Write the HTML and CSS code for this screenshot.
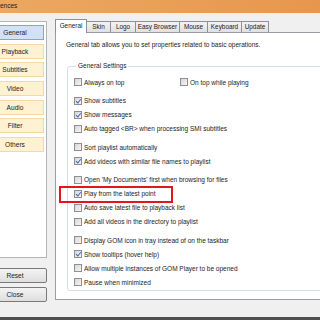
FILE: index.html
```html
<!DOCTYPE html>
<html lang="en">
<head>
    <meta charset="UTF-8">
    <meta name="viewport" content="width=device-width, initial-scale=1.0">
    <title>Preferences</title>
    <link rel="stylesheet" href="styles.css">
</head>
<body>
    <div class="window">
        <!-- 標題列 -->
        <div class="titlebar">ences</div>

        <div class="main">
            <!-- 左側分類 -->
            <div class="side">
                <div class="cats">
                    <div class="cat active">General</div>
                    <div class="cat">Playback</div>
                    <div class="cat">Subtitles</div>
                    <div class="cat">Video</div>
                    <div class="cat">Audio</div>
                    <div class="cat">Filter</div>
                    <div class="cat">Others</div>
                </div>
                <div class="side-buttons">
                    <button class="btn">Reset</button>
                    <button class="btn">Close</button>
                </div>
            </div>

            <!-- 分頁 -->
            <div class="tabbox">
                <div class="tabs">
                    <div class="tab selected" style="width: 32px">General</div>
                    <div class="tab" style="width: 25px">Skin</div>
                    <div class="tab" style="width: 26px">Logo</div>
                    <div class="tab" style="width: 45px">Easy Browser</div>
                    <div class="tab" style="width: 29px">Mouse</div>
                    <div class="tab" style="width: 35px">Keyboard</div>
                    <div class="tab" style="width: 28px">Update</div>
                </div>
                <div class="page">
                    <p class="desc">General tab allows you to set properties related to basic operations.</p>
                    <fieldset class="group">
                        <legend>General Settings</legend>

                        <div class="row">
                            <span class="opt first"><span class="cb"></span>Always on top</span>
                            <span class="opt"><span class="cb"></span>On top while playing</span>
                        </div>

                        <div class="row spaced"><span class="cb checked"></span>Show subtitles</div>
                        <div class="row"><span class="cb checked"></span>Show messages</div>
                        <div class="row"><span class="cb"></span>Auto tagged &lt;BR&gt; when processing SMI subtitles</div>

                        <div class="row spaced"><span class="cb"></span>Sort playlist automatically</div>
                        <div class="row"><span class="cb checked"></span>Add videos with similar file names to playlist</div>

                        <div class="row spaced"><span class="cb"></span>Open 'My Documents' first when browsing for files</div>
                        <div class="row marked"><span class="cb checked"></span>Play from the latest point<span class="highlight"></span></div>
                        <div class="row"><span class="cb"></span>Auto save latest file to playback list</div>
                        <div class="row"><span class="cb"></span>Add all videos in the directory to playlist</div>

                        <div class="row spaced"><span class="cb"></span>Display GOM icon in tray instead of on the taskbar</div>
                        <div class="row"><span class="cb checked"></span>Show tooltips (hover help)</div>
                        <div class="row"><span class="cb"></span>Allow multiple instances of GOM Player to be opened</div>
                        <div class="row"><span class="cb"></span>Pause when minimized</div>
                    </fieldset>
                </div>
            </div>
        </div>

        <div class="taskbar"></div>
    </div>
</body>
</html>
```

FILE: styles.css
```css
body {
    margin: 0;
    width: 320px;
    height: 320px;
    overflow: hidden;
    font-family: "Liberation Sans", Arial, sans-serif;
    color: #1b1b1b;
    background-color: #f0f0f0;
}

.window {
    width: 320px;
    height: 320px;
    display: flex;
    flex-direction: column;
    overflow: hidden;
}

.titlebar {
    height: 13px;
    flex: none;
    background: linear-gradient(to right, #eba861, #e7974d);
    font-size: 6.5px;
    line-height: 12px;
    color: #222;
}

.main {
    height: 304px;
    flex: none;
    display: flex;
}

/* 左側 */
.side {
    width: 47px;
    flex: none;
    display: flex;
    flex-direction: column;
    align-items: flex-end;
}

.cats {
    margin-top: 8px;
    width: 67px;
    height: 237px;
    box-sizing: border-box;
    background: #fff;
    border: 1px solid #b5b5b5;
    padding: 3px 2px 0 5px;
    display: flex;
    flex-direction: column;
    gap: 3.7px;
}

.cat {
    height: 15px;
    box-sizing: border-box;
    background: #fff2d2;
    border: 1px solid #f4d9a2;
    font-size: 6.6px;
    line-height: 13px;
    text-align: center;
}

.cat.active {
    background: #d3e1f5;
    border-color: #88a5cd;
}

.side-buttons {
    margin-top: 10px;
    display: flex;
    flex-direction: column;
    gap: 4px;
}

.btn {
    width: 64px;
    height: 15px;
    padding: 0;
    box-sizing: border-box;
    border: 1px solid #7a7a7a;
    border-radius: 2px;
    background: linear-gradient(#f4f4f4, #dedede);
    font-family: inherit;
    font-size: 6.6px;
    color: #1b1b1b;
}

/* 分頁 */
.tabbox {
    margin-left: 8px;
    margin-top: 6px;
    width: 300px;
    flex: none;
}

.tabs {
    height: 13px;
    display: flex;
    align-items: flex-end;
}

.tab {
    height: 11px;
    box-sizing: border-box;
    border: 1px solid #8d9097;
    border-bottom: none;
    margin-right: -1px;
    background: linear-gradient(#f3f3f3, #e1e1e1);
    font-size: 6.4px;
    line-height: 10px;
    text-align: center;
    white-space: nowrap;
}

.tab.selected {
    height: 14px;
    margin-bottom: -1px;
    background: #fff;
    position: relative;
    z-index: 1;
    line-height: 12px;
}

.page {
    height: 268px;
    box-sizing: border-box;
    background: #fff;
    border: 1px solid #9a9da4;
    padding: 8px 0 0 11px;
}

.desc {
    margin: 0 0 13px -1px;
    font-size: 6.5px;
    line-height: 8px;
    white-space: nowrap;
}

.group {
    margin: 0;
    width: 260px;
    border: 1px solid #d8dde2;
    border-radius: 3px;
    padding: 5px 0 0 6px;
    height: 229px;
    box-sizing: border-box;
}

.group legend {
    padding: 0 2px;
    margin-left: 2px;
    font-size: 6.5px;
    line-height: 8px;
}

.row {
    height: 14px;
    display: flex;
    align-items: center;
    font-size: 6.5px;
    white-space: nowrap;
}

.row.spaced {
    margin-top: 4.5px;
}

.row.marked {
    position: relative;
}

.opt {
    display: flex;
    align-items: center;
}

.opt.first {
    width: 106px;
}

.cb {
    width: 8px;
    height: 8px;
    flex: none;
    box-sizing: border-box;
    margin-right: 2px;
    border: 1px solid #8e8f8f;
    background: linear-gradient(135deg, #d6d6d6, #f6f6f6);
    display: flex;
    justify-content: center;
    align-items: center;
}

.cb.checked::after {
    content: "";
    width: 1.6px;
    height: 3.8px;
    margin-top: -1px;
    border-right: 1.3px solid #3a64c8;
    border-bottom: 1.3px solid #3a64c8;
    transform: rotate(38deg);
}

/* 紅框標示 */
.highlight {
    position: absolute;
    left: -15px;
    top: -1px;
    width: 114px;
    height: 17px;
    box-sizing: border-box;
    border: 2px solid #e4151c;
}

.taskbar {
    flex: 1;
    background: #4f4f4f;
}
```
